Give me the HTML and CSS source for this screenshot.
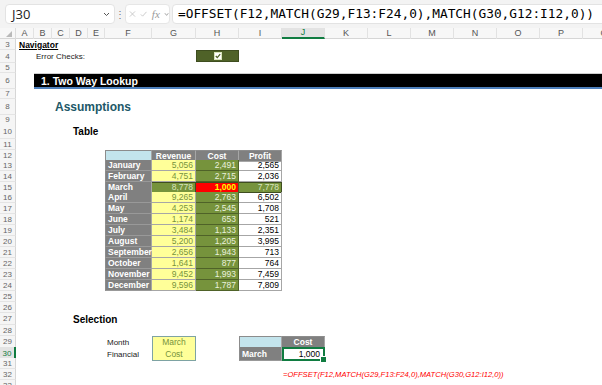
FILE: index.html
```html
<!DOCTYPE html>
<html lang="en">
<head>
    <meta charset="UTF-8">
    <title>Two Way Lookup</title>
    <link rel="stylesheet" href="styles.css">
</head>
<body>
    <!-- formula bar -->
    <div class="formula-bar">
        <div class="name-box">
            <span class="ref">J30</span>
            <svg class="chev" width="7" height="5" viewBox="0 0 7 5"><polyline points="1,1 3.5,3.5 6,1" fill="none" stroke="#555" stroke-width="1"/></svg>
        </div>
        <span class="grip">⋮</span>
        <div class="fx-box">
            <svg width="8" height="8" viewBox="0 0 8 8"><path d="M1 1 L7 7 M7 1 L1 7" stroke="#c4c4c4" stroke-width="1"/></svg>
            <svg width="8" height="8" viewBox="0 0 8 8"><polyline points="1,4.5 3,6.5 7.5,1.5" fill="none" stroke="#c4c4c4" stroke-width="1"/></svg>
            <span class="fx">fx</span>
            <svg class="chev" width="6" height="5" viewBox="0 0 6 5"><polyline points="1,1 3,3.5 5,1" fill="none" stroke="#999" stroke-width="1"/></svg>
        </div>
        <div class="formula-input">=OFFSET(F12,MATCH(G29,F13:F24,0),MATCH(G30,G12:I12,0))</div>
    </div>

    <!-- sheet -->
    <div class="sheet">
        <div class="row col-heads">
            <div class="corner"><span class="tri"></span></div>
            <div class="ch">A</div><div class="ch">B</div><div class="ch">C</div><div class="ch">D</div><div class="ch">E</div>
            <div class="ch">F</div><div class="ch">G</div><div class="ch">H</div><div class="ch">I</div>
            <div class="ch active">J</div><div class="ch">K</div><div class="ch">L</div><div class="ch">M</div>
            <div class="ch">N</div><div class="ch">O</div><div class="ch">P</div><div class="ch">Q</div>
        </div>

        <div class="row h11"><div class="rh">3</div><div class="cell c-a span4 nav">Navigator</div></div>
        <div class="row h13">
            <div class="rh">4</div>
            <div class="cell c-b span5 plain">Error Checks:</div>
            <div class="cell c-h check">
                <svg width="8" height="8" viewBox="0 0 8 8"><rect x="0.5" y="0.5" width="7" height="7" fill="#fff" stroke="#d8e4bc"/><polyline points="1.8,4 3.3,5.6 6.2,2.2" fill="none" stroke="#4f6228" stroke-width="1.3"/></svg>
            </div>
        </div>
        <div class="row h10"><div class="rh">5</div></div>
        <div class="row h16"><div class="rh">6</div><div class="cell c-b to-end banner">1. Two Way Lookup</div></div>
        <div class="row h10"><div class="rh">7</div></div>
        <div class="row h16"><div class="rh">8</div><div class="cell c-c span6 heading">Assumptions</div></div>
        <div class="row h9"><div class="rh">9</div></div>
        <div class="row h15"><div class="rh">10</div><div class="cell c-d span3 sub">Table</div></div>
        <div class="row h11"><div class="rh">11</div></div>

        <!-- lookup table -->
        <div class="row h10">
            <div class="rh">12</div>
            <div class="cell c-f tc first top hatch"></div>
            <div class="cell c-g tc top hd">Revenue</div>
            <div class="cell c-h tc top hd">Cost</div>
            <div class="cell c-i tc top hd">Profit</div>
        </div>
        <div class="row h11"><div class="rh">13</div><div class="cell c-f tc first mon">January</div><div class="cell c-g tc rev">5,056</div><div class="cell c-h tc cost">2,491</div><div class="cell c-i tc prof">2,565</div></div>
        <div class="row h11"><div class="rh">14</div><div class="cell c-f tc first mon">February</div><div class="cell c-g tc rev">4,751</div><div class="cell c-h tc cost">2,715</div><div class="cell c-i tc prof">2,036</div></div>
        <div class="row h10"><div class="rh">15</div><div class="cell c-f tc first mon">March</div><div class="cell c-g tc rev hl">8,778</div><div class="cell c-h tc cost hit">1,000</div><div class="cell c-i tc prof hl">7,778</div></div>
        <div class="row h11"><div class="rh">16</div><div class="cell c-f tc first mon">April</div><div class="cell c-g tc rev">9,265</div><div class="cell c-h tc cost">2,763</div><div class="cell c-i tc prof">6,502</div></div>
        <div class="row h11"><div class="rh">17</div><div class="cell c-f tc first mon">May</div><div class="cell c-g tc rev">4,253</div><div class="cell c-h tc cost">2,545</div><div class="cell c-i tc prof">1,708</div></div>
        <div class="row h11"><div class="rh">18</div><div class="cell c-f tc first mon">June</div><div class="cell c-g tc rev">1,174</div><div class="cell c-h tc cost">653</div><div class="cell c-i tc prof">521</div></div>
        <div class="row h11"><div class="rh">19</div><div class="cell c-f tc first mon">July</div><div class="cell c-g tc rev">3,484</div><div class="cell c-h tc cost">1,133</div><div class="cell c-i tc prof">2,351</div></div>
        <div class="row h11"><div class="rh">20</div><div class="cell c-f tc first mon">August</div><div class="cell c-g tc rev">5,200</div><div class="cell c-h tc cost">1,205</div><div class="cell c-i tc prof">3,995</div></div>
        <div class="row h11"><div class="rh">21</div><div class="cell c-f tc first mon">September</div><div class="cell c-g tc rev">2,656</div><div class="cell c-h tc cost">1,943</div><div class="cell c-i tc prof">713</div></div>
        <div class="row h11"><div class="rh">22</div><div class="cell c-f tc first mon">October</div><div class="cell c-g tc rev">1,641</div><div class="cell c-h tc cost">877</div><div class="cell c-i tc prof">764</div></div>
        <div class="row h11"><div class="rh">23</div><div class="cell c-f tc first mon">November</div><div class="cell c-g tc rev">9,452</div><div class="cell c-h tc cost">1,993</div><div class="cell c-i tc prof">7,459</div></div>
        <div class="row h11"><div class="rh">24</div><div class="cell c-f tc first mon">December</div><div class="cell c-g tc rev">9,596</div><div class="cell c-h tc cost">1,787</div><div class="cell c-i tc prof">7,809</div></div>

        <div class="row h11"><div class="rh">25</div></div>
        <div class="row h11"><div class="rh">26</div></div>
        <div class="row h12"><div class="rh">27</div><div class="cell c-d span3 sub">Selection</div></div>
        <div class="row h11"><div class="rh">28</div></div>
        <div class="row h11">
            <div class="rh">29</div>
            <div class="cell c-f plain">Month</div>
            <div class="cell c-g inp">March</div>
            <div class="cell c-i tc first top hatch"></div>
            <div class="cell c-j tc top hd">Cost</div>
        </div>
        <div class="row h11">
            <div class="rh current">30</div>
            <div class="cell c-f plain">Financial</div>
            <div class="cell c-g inp next">Cost</div>
            <div class="cell c-i tc first mon">March</div>
            <div class="cell c-j selected">1,000</div>
        </div>
        <div class="row h11"><div class="rh">31</div></div>
        <div class="row h11"><div class="rh">32</div><div class="cell c-j to-end note">=OFFSET(F12,MATCH(G29,F13:F24,0),MATCH(G30,G12:I12,0))</div></div>
        <div class="row h11"><div class="rh">33</div></div>
    </div>
</body>
</html>
```

FILE: styles.css
```css
/* base */
* {
    box-sizing: border-box;
}
body {
    margin: 0;
    width: 602px;
    height: 385px;
    overflow: hidden;
    background-color: #fff;
    color: #000;
    font-family: "Liberation Sans", Arial, sans-serif;
}

/* formula bar */
.formula-bar {
    height: 28px;
    background-color: #f3f3f3;
    display: flex;
    align-items: center;
    padding-left: 5px;
}
.name-box {
    width: 110px;
    height: 20px;
    background-color: #fff;
    border: 1px solid #e3e3e3;
    border-radius: 4px;
    display: flex;
    align-items: center;
    padding: 0 4px 0 6px;
}
.name-box .ref {
    flex-grow: 1;
    font-family: "Open Sans", "Liberation Sans", sans-serif;
    font-size: 13px;
    color: #222;
}
.grip {
    width: 10px;
    text-align: center;
    font-size: 10px;
    color: #777;
}
.fx-box {
    width: 45px;
    height: 20px;
    background-color: #fff;
    border: 1px solid #e6e6e6;
    border-radius: 4px;
    display: flex;
    align-items: center;
    gap: 4px;
    padding-left: 3px;
}
.fx-box .fx {
    font-family: "Liberation Serif", serif;
    font-style: italic;
    font-size: 11px;
    color: #9a9a9a;
    margin-left: 1px;
}
.formula-input {
    flex-grow: 1;
    height: 20px;
    margin-left: 2px;
    margin-right: -10px;
    background-color: #fff;
    border: 1px solid #e3e3e3;
    border-radius: 4px;
    padding-left: 5px;
    font-family: "DejaVu Sans Mono", monospace;
    font-size: 12.8px;
    line-height: 18px;
    white-space: nowrap;
}

/* sheet grid: row header, A..Q */
.row {
    display: grid;
    grid-template-columns: 16px 18px 18px 18px 18px 17px 47px 44px 43px 43px 43px 43px 43px 43px 43px 43px 43px 43px;
}
.h9 { height: 9px; }
.h10 { height: 10px; }
.h11 { height: 11px; }
.h12 { height: 12px; }
.h13 { height: 13px; }
.h15 { height: 15px; }
.h16 { height: 16px; }

.c-a { grid-column: 2; }
.c-b { grid-column: 3; }
.c-c { grid-column: 4; }
.c-d { grid-column: 5; }
.c-f { grid-column: 7; }
.c-g { grid-column: 8; }
.c-h { grid-column: 9; }
.c-i { grid-column: 10; }
.c-j { grid-column: 11; }
.span3 { grid-column-end: span 3; }
.span4 { grid-column-end: span 4; }
.span5 { grid-column-end: span 5; }
.span6 { grid-column-end: span 6; }
.to-end { grid-column-end: -1; }

/* headers */
.col-heads {
    height: 11px;
    background-color: #f7f7f7;
    border-bottom: 1px solid #d6d6d6;
}
.corner {
    display: flex;
    align-items: flex-end;
    justify-content: flex-end;
    padding: 0 3px 2px 0;
    border-right: 1px solid #dcdcdc;
}
.corner .tri {
    width: 0;
    height: 0;
    border-left: 6px solid transparent;
    border-bottom: 6px solid #b9b9b9;
}
.ch {
    font-size: 9px;
    color: #555;
    text-align: center;
    line-height: 10px;
    border-right: 1px solid #e2e2e2;
}
.ch.active {
    background-color: #e3e3e3;
    color: #107c41;
    border-bottom: 2px solid #107c41;
    line-height: 9px;
}
.rh {
    grid-column: 1;
    background-color: #f5f5f5;
    border-right: 1px solid #d6d6d6;
    border-bottom: 1px solid #e4e4e4;
    font-size: 8px;
    color: #666;
    display: flex;
    align-items: center;
    justify-content: center;
}
.rh.current {
    background-color: #e3e3e3;
    color: #107c41;
    border-right: 2px solid #107c41;
}

/* cells */
.cell {
    display: flex;
    align-items: center;
    padding: 0 2px;
    white-space: nowrap;
    font-size: 8.5px;
    min-width: 0;
}
.nav {
    padding-left: 3px;
    font-weight: bold;
    text-decoration: underline;
}
.plain {
    font-size: 8px;
    color: #222;
}
.check {
    background-color: #4f6228;
    border: 1px solid #3e4d1f;
    justify-content: center;
    margin-bottom: 1px;
}
.banner {
    background-color: #000;
    color: #fff;
    font-weight: bold;
    font-size: 10.5px;
    padding-left: 7px;
    border-top: 1px solid #cfcfcf;
    border-bottom: 2px solid #4f81bd;
}
.heading {
    padding-left: 3px;
    font-weight: bold;
    font-size: 12px;
    color: #215868;
}
.sub {
    padding-left: 3px;
    font-weight: bold;
    font-size: 10px;
}

/* table */
.tc {
    border-right: 1px solid #a6a6a6;
    border-bottom: 1px solid #a6a6a6;
}
.tc.first { border-left: 1px solid #8c8c8c; }
.tc.top { border-top: 1px solid #8c8c8c; }
.hatch {
    background-color: #c3e4ec;
    background-image: radial-gradient(#86c1cf 45%, transparent 50%);
    background-size: 2px 2px;
}
.hd {
    background-color: #808080;
    color: #fff;
    font-weight: bold;
    justify-content: center;
}
.mon {
    background-color: #808080;
    color: #fff;
    font-weight: bold;
    border-bottom-color: #999;
}
.rev {
    background-color: #ffff99;
    color: #76933c;
    justify-content: flex-end;
}
.cost {
    background-color: #76933c;
    color: #ebf1de;
    justify-content: flex-end;
    border-color: #4f6228;
}
.prof {
    justify-content: flex-end;
}
.hl {
    background-color: #76933c;
    color: #d8e4bc;
    border-color: #3e4d1f;
    box-shadow: inset 0 1px 0 #3e4d1f;
}
.hit {
    background-color: #ff0000;
    color: #ffff00;
    font-weight: bold;
    box-shadow: inset 0 1px 0 #3e4d1f;
}

/* selection */
.inp {
    background-color: #ffff99;
    color: #76933c;
    justify-content: center;
    border: 1px solid #7ea3a3;
}
.inp.next { border-top: none; }
.selected {
    position: relative;
    justify-content: flex-end;
    border: 2px solid #107c41;
    padding-right: 3px;
}
.selected::after {
    content: "";
    position: absolute;
    right: -4px;
    bottom: -4px;
    width: 5px;
    height: 5px;
    background-color: #107c41;
    border: 1px solid #fff;
}
.note {
    padding-left: 1px;
    font-size: 7.6px;
    font-style: italic;
    color: #ff0000;
}
```
